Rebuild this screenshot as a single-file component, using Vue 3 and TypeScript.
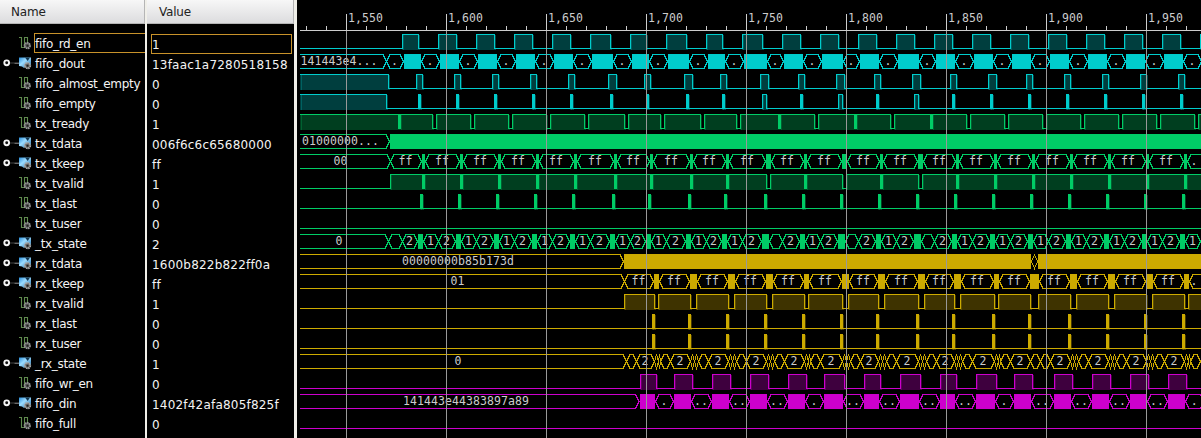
<script setup lang="ts">
interface Signal {
  name: string
  value: string
  bus?: boolean
}
type Span = [number, number]
interface Cell {
  a: number
  b: number
  label?: string
  solid?: boolean
  open?: boolean
  at?: number
}
interface Trace {
  row: number
  color: string
  line: string
  solids: Span[]
  fills: Span[]
  texts: { x: number; t: string; len: number }[]
}

const signals: Signal[] = [
  { name: 'fifo_rd_en', value: '1' },
  { name: 'fifo_dout', value: '13faac1a7280518158', bus: true },
  { name: 'fifo_almost_empty', value: '0' },
  { name: 'fifo_empty', value: '0' },
  { name: 'tx_tready', value: '1' },
  { name: 'tx_tdata', value: '006f6c6c65680000', bus: true },
  { name: 'tx_tkeep', value: 'ff', bus: true },
  { name: 'tx_tvalid', value: '1' },
  { name: 'tx_tlast', value: '0' },
  { name: 'tx_tuser', value: '0' },
  { name: '_tx_state', value: '2', bus: true },
  { name: 'rx_tdata', value: '1600b822b822ff0a', bus: true },
  { name: 'rx_tkeep', value: 'ff', bus: true },
  { name: 'rx_tvalid', value: '1' },
  { name: 'rx_tlast', value: '0' },
  { name: 'rx_tuser', value: '0' },
  { name: '_rx_state', value: '1', bus: true },
  { name: 'fifo_wr_en', value: '0' },
  { name: 'fifo_din', value: '1402f42afa805f825f', bus: true },
  { name: 'fifo_full', value: '0' },
]

const START = 300
const END = 1210
const LABEL_PITCH = 7

function scalar(row: number, color: string, highs: Span[]): Trace {
  const hi = 0.5
  const lo = 14.5
  const solids: Span[] = []
  let line = ''
  if (!highs.length || highs[0][0] > START) line = `M${START} ${lo}`
  highs.forEach(([a, b], i) => {
    line += a <= START ? `M${START} ${hi}` : `H${a + 0.5}V${hi}`
    if (b < END) line += `H${b + 0.5}V${lo}`
    if (b - a <= 2) solids.push([a, a + 3])
    const next = highs[i + 1]
    if (next && next[0] - b <= 2) solids.push([b, b + 3])
  })
  line += `H${END}`
  return { row, color, line, solids, fills: highs, texts: [] }
}

function bus(row: number, color: string, cells: Cell[]): Trace {
  const solids: Span[] = []
  const texts: Trace['texts'] = []
  let line = ''
  for (const c of cells) {
    if (c.solid) {
      solids.push([c.a, c.b])
      continue
    }
    const s = Math.min(3.5, (c.b - c.a) / 2)
    const l = c.open ? START : c.a + s
    const r = c.b - s
    line += `M${l} .5H${r}L${c.b} 7.5L${r} 14.5H${l}`
    if (!c.open) line += `L${c.a} 7.5L${l} .5`
    if (c.label) texts.push({ x: c.at ?? (c.a + c.b) / 2 - 0.5, t: c.label, len: c.label.length * LABEL_PITCH })
  }
  return { row, color, line, solids, fills: [], texts }
}

const bars = (xs: number[], wide: number[] = []): Span[] =>
  xs.map((x): Span => [x, x + (wide.includes(x) ? 4 : 2)])

function highsFromGaps(from: number, gaps: Span[]): Span[] {
  const out: Span[] = []
  let a = from
  for (const [g0, g1] of gaps) {
    out.push([a, g0])
    a = g1
  }
  out.push([a, END])
  return out
}

const CYAN = '#00cccc'
const GREEN = '#00cc66'
const GOLD = '#ccaa00'
const MAGENTA = '#cc00cc'

const rdEn: Span[] = [
  [402, 418], [438, 456], [476, 494], [514, 532], [552, 570], [590, 610], [630, 646], [666, 686], [706, 722],
  [742, 762], [782, 800], [820, 838], [858, 876], [896, 914], [934, 952], [972, 990], [1010, 1028], [1048, 1066],
  [1086, 1104], [1124, 1142], [1162, 1180], [1200, 1218],
]
const stalled = [762, 838, 914]
const almostEmpty: Span[] = [
  [300, 388], [416, 422], [454, 460], [492, 498], [530, 536], [568, 574], [608, 616], [644, 650], [684, 692],
  [720, 726], [760, 768], [798, 804], [836, 844], [874, 880], [912, 920], [950, 956], [988, 996], [1026, 1032],
  [1064, 1070], [1102, 1108], [1140, 1146], [1178, 1184],
]
const readyGaps: Span[] = [
  [398, 400], [432, 436], [470, 474], [508, 512], [546, 550], [584, 588], [624, 628], [660, 664], [700, 704],
  [736, 740], [778, 780], [814, 818], [854, 856], [890, 894], [930, 932], [966, 970], [1004, 1008], [1042, 1046],
  [1080, 1084], [1118, 1122], [1156, 1160], [1194, 1198],
]
const frameGaps = [
  422, 460, 498, 536, 574, 614, 650, 690, 726, 766, 804, 842, 880, 918, 956, 994, 1032, 1070, 1108, 1146, 1184,
]
const wideFrames = [766, 842, 918]
const txLast = [
  420, 458, 496, 534, 572, 612, 648, 688, 724, 764, 802, 840, 878, 916, 954, 992, 1030, 1068, 1106, 1144, 1182,
]
const rxValid: Span[] = [
  [624, 654], [658, 690], [696, 728], [734, 766], [772, 804], [808, 842], [848, 878], [884, 918], [924, 954],
  [960, 994], [998, 1030], [1038, 1070], [1076, 1108], [1114, 1146], [1152, 1184], [1188, END],
]
const rxKeepBlocks: Span[] = [
  [654, 659], [690, 697], [728, 735], [766, 773], [804, 809], [842, 849], [878, 885], [918, 925], [954, 961],
  [994, 999], [1030, 1039], [1070, 1077], [1108, 1115], [1146, 1153], [1184, 1189],
]
const rxLast = [652, 688, 726, 764, 802, 840, 876, 916, 952, 992, 1028, 1068, 1106, 1144, 1182]
const wrEn: Span[] = [
  [640, 656], [674, 692], [712, 730], [750, 768], [788, 806], [824, 844], [864, 880], [900, 920], [940, 956],
  [976, 996], [1014, 1032], [1054, 1072], [1092, 1110], [1130, 1148], [1168, 1186],
]

function doutCells(): Cell[] {
  const cells: Cell[] = [{ a: 300, b: 386.5, open: true, label: '141443e4...', at: 339 }]
  let prev = 386.5
  for (const [r, f] of rdEn) {
    cells.push({ a: prev, b: r + 1.5, label: '.' })
    prev = f + (stalled.includes(f) ? 5 : 3)
    cells.push({ a: r + 2, b: prev, solid: true })
    prev += 0.5
  }
  return cells
}

function keepCells(first: Cell, blocks: Span[]): Cell[] {
  const cells: Cell[] = [first]
  let prev = first.b
  for (const [a, b] of blocks) {
    cells.push({ a: prev, b: a - 0.5, label: 'ff' }, { a, b, solid: true })
    prev = b + 0.5
  }
  cells.push({ a: prev, b: prev + 18, label: '.', at: 1194 })
  return cells
}

function txStateCells(): Cell[] {
  const cells: Cell[] = [
    { a: 300, b: 388.5, open: true, label: '0', at: 339 },
    { a: 388.5, b: 402.5 },
  ]
  rdEn.forEach(([r, f], i) => {
    const long = stalled.includes(f)
    const e = f + (long ? 7 : 5)
    cells.push({ a: r + 0.5, b: f - 0.5, label: f < 1200 ? '2' : undefined }, { a: f, b: e, solid: true })
    const next = rdEn[i + 1]
    if (next) cells.push({ a: e + 0.5, b: next[0] + 0.5, label: long ? undefined : '1' })
  })
  return cells
}

function rxStateCells(): Cell[] {
  const cells: Cell[] = [
    { a: 300, b: 626.5, open: true, label: '0', at: 458 },
    { a: 626.5, b: 636.5 },
  ]
  wrEn.forEach(([w], i) => {
    const fall = rxValid[i][1] + 0.5
    cells.push({ a: w - 3.5, b: fall, label: '2' })
    const rise = rxValid[i + 1][0] + 2.5
    if (rise - fall < 9) cells.push({ a: fall, b: fall + 4 }, { a: fall + 4, b: rise })
    else cells.push({ a: fall, b: rise })
    cells.push({ a: rise, b: wrEn[i + 1] ? wrEn[i + 1][0] - 3.5 : rise + 10 })
  })
  return cells
}

function dinCells(): Cell[] {
  const cells: Cell[] = [{ a: 300, b: 639, open: true, label: '141443e44383897a89', at: 466 }]
  wrEn.forEach(([a, f], i) => {
    const b = f - 1
    cells.push({ a, b, solid: true })
    const end = wrEn[i + 1] ? wrEn[i + 1][0] - 0.5 : 1204
    cells.push({ a: b + 0.5, b: end, label: end - b > 19 && wrEn[i + 1] ? '..' : '.' })
  })
  return cells
}

const traces: Trace[] = [
  scalar(0, CYAN, rdEn),
  bus(1, CYAN, doutCells()),
  scalar(2, CYAN, almostEmpty),
  scalar(3, CYAN, [[300, 386], ...bars(rdEn.slice(0, -1).map((p) => p[1]), stalled)]),
  scalar(4, GREEN, highsFromGaps(300, readyGaps)),
  bus(5, GREEN, [
    { a: 300, b: 389.5, open: true, label: '01000000...', at: 340.5 },
    { a: 390, b: 1201, solid: true },
  ]),
  bus(6, GREEN, keepCells(
    { a: 300, b: 390.5, open: true, label: '00', at: 340.5 },
    frameGaps.map((x): Span => [x, x + (wideFrames.includes(x) ? 5 : 3)]),
  )),
  scalar(7, GREEN, highsFromGaps(390, bars(frameGaps, wideFrames))),
  scalar(8, GREEN, bars(txLast)),
  scalar(9, GREEN, []),
  bus(10, GREEN, txStateCells()),
  bus(11, GOLD, [
    { a: 300, b: 623.5, open: true, label: '00000000b85b173d', at: 458 },
    { a: 624, b: 1031, solid: true },
    { a: 1031.5, b: 1037.5 },
    { a: 1038, b: 1201, solid: true },
  ]),
  bus(12, GOLD, keepCells({ a: 300, b: 624.5, open: true, label: '01', at: 457.5 }, rxKeepBlocks)),
  scalar(13, GOLD, rxValid),
  scalar(14, GOLD, bars(rxLast)),
  scalar(15, GOLD, bars(rxLast)),
  bus(16, GOLD, rxStateCells()),
  scalar(17, MAGENTA, wrEn),
  bus(18, MAGENTA, dinCells()),
  scalar(19, MAGENTA, []),
]

const majors = Array.from({ length: 9 }, (_, i) => ({ x: 346 + i * 100, t: `1,${550 + i * 50}` }))
const minors = Array.from({ length: 45 }, (_, i) => 306 + i * 20).filter((x) => (x - 346) % 100 !== 0)
</script>

<template>
  <div class="viewer">
    <section class="col names">
      <header class="head">Name</header>
      <ul class="list">
        <li v-for="(s, i) in signals" :key="s.name" class="row">
          <svg class="icon" width="34" height="20" viewBox="0 0 34 20">
            <defs>
              <linearGradient :id="'blue' + i" x1="0" y1="0" x2="1" y2="1">
                <stop offset="0" stop-color="#2a8fdc" />
                <stop offset=".4" stop-color="#9edcff" />
                <stop offset="1" stop-color="#1769a8" />
              </linearGradient>
            </defs>
            <template v-if="s.bus">
              <path d="M10 10H14.5" stroke="#444" />
              <path d="M14.5 10.2H19" stroke="#999" />
              <circle cx="6.7" cy="9.8" r="2.4" fill="#111" stroke="#f4f4f4" stroke-width="1.9" />
              <path d="M19 4.5H31V12H26L24 15L22 13.5L19 13Z" :fill="`url(#blue${i})`" />
              <path d="M25 4.5L27.7 8L30 4.5" fill="#12344d" />
              <circle cx="27.5" cy="12.6" r="2.8" fill="#666" stroke="#aaa" stroke-width="1.7" stroke-dasharray="1.5 .6" />
            </template>
            <template v-else>
              <path d="M19 4.5H21.5V14.5H24.5V4.5H27.5V10" fill="none" stroke="#5f8a4e" stroke-width="1.1" />
              <circle cx="27.3" cy="12.6" r="2.8" fill="#555" stroke="#999" stroke-width="1.7" stroke-dasharray="1.5 .6" />
            </template>
            <circle cx="27.5" cy="12.8" r="1" fill="#222" />
          </svg>
          <span class="label" :class="{ picked: i === 0 }">{{ s.name }}</span>
        </li>
      </ul>
    </section>
    <section class="col values">
      <header class="head">Value</header>
      <ul class="list">
        <li v-for="(s, i) in signals" :key="s.name" class="row">
          <span class="val" :class="{ chosen: i === 0 }">{{ s.value }}</span>
        </li>
      </ul>
    </section>
    <svg class="wave" width="904" height="438" viewBox="297 0 904 438">
      <g shape-rendering="crispEdges">
        <path d="M300 30.5H1201" stroke="#ccc" />
        <path v-for="x in minors" :key="x" :d="`M${x + 0.5} 26V30`" stroke="#ccc" />
      </g>
      <text v-for="m in majors" :key="m.x" :x="m.x + 2" y="22" class="data" textLength="35">{{ m.t }}</text>
      <g v-for="t in traces" :key="t.row" :transform="`translate(0 ${34 + t.row * 20})`">
        <g shape-rendering="crispEdges" :fill="t.color">
          <template v-for="([a, b], i) in t.fills" :key="i">
            <rect :x="a" y="1" :width="b - a + 2" height="15" fill-opacity=".3" />
            <rect :x="a + 1" y="1" width="1" height="15" fill-opacity=".25" />
            <rect :x="b + 1" y="1" width="1" height="15" fill-opacity=".05" />
          </template>
          <path :d="t.line" fill="none" :stroke="t.color" />
          <rect v-for="([a, b], i) in t.solids" :key="'s' + i" :x="a" y="0" :width="b - a" height="15" />
        </g>
        <text v-for="(l, i) in t.texts" :key="i" :x="l.x - l.len / 2" y="11" class="data" :textLength="l.len">{{ l.t }}</text>
      </g>
      <g shape-rendering="crispEdges">
        <template v-for="m in majors" :key="m.x">
          <path :d="`M${m.x + 0.5} 14V31`" stroke="#ccc" />
          <path :d="`M${m.x + 0.5} 31V438`" stroke="#999" />
        </template>
      </g>
    </svg>
  </div>
</template>

<style>
html,
body {
  background: #000;
  overflow: hidden;
}
</style>

<style scoped>
.viewer {
  display: flex;
  width: 1201px;
  height: 438px;
  background: #000;
  color: #f4f4f4;
  font: 12px/20px "DejaVu Sans", sans-serif;
}
.col {
  box-sizing: border-box;
  flex: none;
  overflow: hidden;
}
.names {
  width: 147px;
  border-right: 2px solid #f0efe9;
}
.values {
  width: 150px;
  border-right: 3px solid #f0efe9;
}
.head {
  box-sizing: border-box;
  height: 24px;
  border-right: 1px solid #b5b5b5;
  border-bottom: 1px solid #b5b5b5;
  background: linear-gradient(#f7f7f7, #dcdcde);
  color: #222;
  line-height: 24px;
  padding-left: 11px;
  letter-spacing: -0.2px;
}
.values .head {
  padding-left: 12px;
}
.list {
  list-style: none;
  margin: 0;
  padding: 9px 0 0;
}
.values .list {
  padding-top: 10px;
}
.row {
  display: flex;
  height: 20px;
  white-space: pre;
}
.icon {
  flex: none;
}
.label {
  box-sizing: border-box;
  flex: 1;
  height: 20px;
  padding: 1px 0 0 1px;
  line-height: 20px;
  letter-spacing: -0.3px;
}
.picked {
  border: 1px solid #c8922a;
  border-right: 0;
  padding: 0;
}
.val {
  box-sizing: border-box;
  width: 141px;
  height: 20px;
  margin-left: 4px;
  border: 1px solid transparent;
  line-height: 20px;
  letter-spacing: 0.2px;
}
.chosen {
  border-color: #c8922a;
}
.wave {
  display: block;
  flex: none;
}
.data {
  font: 11.5px "DejaVu Sans Mono", monospace;
  fill: #ccc;
}
</style>
